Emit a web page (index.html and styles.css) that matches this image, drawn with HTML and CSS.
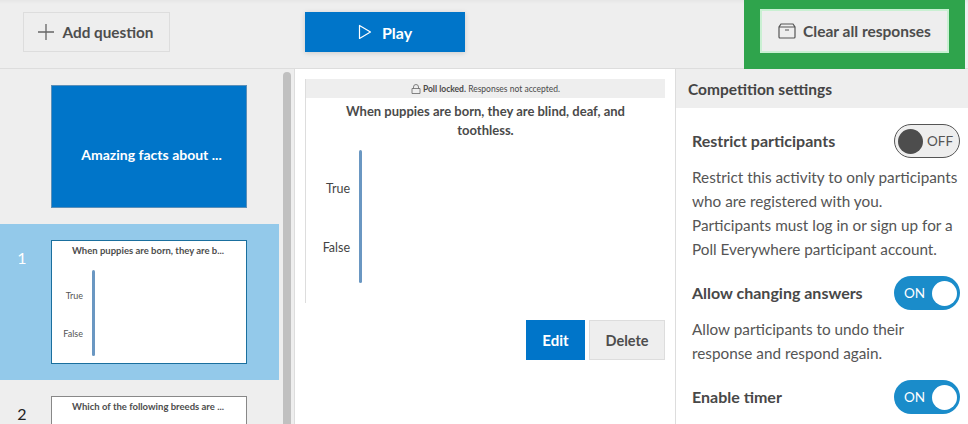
FILE: index.html
```html
<!DOCTYPE html>
<html lang="en">
<head>
<meta charset="utf-8">
<title>Competition settings</title>
<link rel="stylesheet" href="styles.css">
</head>
<body>
<header class="topbar">
  <button class="btn btn-add">
    <svg class="ico" width="18" height="18" viewBox="0 0 18 18"><path d="M9 1v16M1 9h16" fill="none" stroke="#666" stroke-width="1.300"/></svg>
    Add question
  </button>
  <button class="btn btn-play">
    <svg class="ico" width="14" height="16" viewBox="0 0 14 16"><path d="M1.500 1.500v13L12.500 8z" fill="none" stroke="#fff" stroke-width="1.200" stroke-linejoin="round"/></svg>
    Play
  </button>
  <div class="green">
    <button class="btn btn-clear">
      <svg class="ico" width="18" height="16" viewBox="0 0 18 16"><path d="M3 1h12l2 3v10a1 1 0 0 1-1 1H2a1 1 0 0 1-1-1V4zM1 4h16M7 7h4" fill="none" stroke="#555" stroke-width="1.200"/></svg>
      Clear all responses
    </button>
  </div>
</header>
<div class="body">
  <aside class="side">
    <div class="list">
      <div class="row row-first">
        <div class="num"></div>
        <div class="thumb thumb-title">Amazing facts about ...</div>
      </div>
      <div class="row row-active">
        <div class="num">1</div>
        <div class="thumb thumb-active">
          <div class="thumb-q">When puppies are born, they are b...</div>
          <div class="mini">
            <div class="mini-labels"><span>True</span><span>False</span></div>
            <div class="mini-axis"></div>
          </div>
        </div>
      </div>
      <div class="row row-next">
        <div class="num num-dark">2</div>
        <div class="thumb thumb-next">
          <div class="thumb-q">Which of the following breeds are ...</div>
        </div>
      </div>
    </div>
    <div class="track"><div class="thumbbar"></div></div>
  </aside>
  <main class="main">
    <div class="poll">
      <div class="lockbar">
        <svg width="10" height="10" viewBox="0 0 10 10"><path d="M1 4.500h8v5H1zM2.500 4.500V3a2.500 2.500 0 0 1 5 0v1.500" fill="none" stroke="#666" stroke-width=".8"/></svg>
        <span><b>Poll locked.</b> Responses not accepted.</span>
      </div>
      <h2 class="question">When puppies are born, they are blind, deaf, and toothless.</h2>
      <div class="chart">
        <div class="labels"><span>True</span><span>False</span></div>
        <div class="axis"></div>
      </div>
    </div>
    <div class="actions">
      <button class="btn btn-edit">Edit</button>
      <button class="btn btn-delete">Delete</button>
    </div>
  </main>
  <section class="settings">
    <h3 class="settings-head">Competition settings</h3>
    <div class="settings-body">
      <div class="setting">
        <strong>Restrict participants</strong>
        <span class="toggle toggle-off"><i></i>OFF</span>
      </div>
      <p>Restrict this activity to only participants who are registered with you. Participants must log in or sign up for a Poll Everywhere participant account.</p>
      <div class="setting">
        <strong>Allow changing answers</strong>
        <span class="toggle toggle-on">ON<i></i></span>
      </div>
      <p>Allow participants to undo their response and respond again.</p>
      <div class="setting">
        <strong>Enable timer</strong>
        <span class="toggle toggle-on">ON<i></i></span>
      </div>
    </div>
  </section>
</div>
</body>
</html>
```
FILE: styles.css
```css
* { box-sizing: border-box; }
html, body { margin: 0; height: 100%; overflow: hidden; }
body {
  width: 968px;
  height: 424px;
  font-family: "Lato", "Noto Sans", sans-serif;
  color: #4a4a4a;
  background: #fff;
  display: flex;
  flex-direction: column;
}
.btn {
  font: 700 15.300px "Lato", sans-serif;
  display: flex;
  align-items: center;
  justify-content: center;
  border: 1px solid #ddd;
  background: #eee;
  color: #4d4d4d;
  padding: 0;
}
.topbar {
  height: 69px;
  flex: none;
  background: linear-gradient(#e6e6e6, #eee 4px);
  border-bottom: 1px solid #ddd;
  display: flex;
  align-items: flex-start;
  padding: 12px 3px 0 23px;
}
.btn-add { width: 147px; height: 40px; gap: 7px; padding-right: 2px; }
.btn-play {
  width: 160px;
  height: 40px;
  margin-left: 135px;
  gap: 10px;
  background: #0075c9;
  border: 0;
  color: #fff;
  font-size: 16px;
  box-shadow: 0 1px 5px rgba(0,0,0,.15);
}
.green {
  width: 221px;
  height: 69px;
  margin: -12px 0 0 279px;
  background: #2fa44c;
  padding: 9px 16px 0;
}
.btn-clear {
  width: 189px;
  height: 44px;
  gap: 7px;
  border: 2px solid #c9f0d2;
  font-size: 15.500px;
  padding-bottom: 1px;
}
.body { flex: 1; display: flex; min-height: 0; }
.side {
  width: 295px;
  flex: none;
  background: #eee;
  border-right: 1px solid #ddd;
  display: flex;
  overflow: hidden;
}
.list { width: 279px; flex: none; }
.row { display: flex; padding: 16px 0; height: 156px; }
.row-first { height: 155px; }
.row-active { background: #93c9ea; }
.num {
  width: 51px;
  flex: none;
  padding: 8px 7px 0 0;
  text-align: center;
  font-size: 16px;
  color: #fff;
}
.num-dark { color: #222; }
.thumb {
  width: 196px;
  height: 124px;
  background: #fff;
  border: 1px solid #888;
  font-weight: 700;
  font-size: 9.500px;
  color: #4d4d4d;
}
.thumb-title {
  height: 123px;
  background: #0075c9;
  border-color: #5b8fb8;
  color: #fff;
  font-size: 14px;
  padding: 16px 0 0 5px;
  display: flex;
  align-items: center;
  justify-content: center;
}
.thumb-active { border-color: #1a6f9e; }
.thumb-q { text-align: center; padding: 2px 2px 0 0; line-height: 16px; }
.mini { display: flex; height: 86px; margin-top: 11px; }
.mini-labels {
  width: 31px;
  display: flex;
  flex-direction: column;
  gap: 26px;
  padding-top: 20px;
  line-height: 12px;
  text-align: right;
  font-weight: 400;
  font-size: 9px;
  color: #555;
}
.mini-axis { width: 3px; margin-left: 9px; background: #6a97c2; border-radius: 2px; }
.track { width: 15px; padding: 3px 0 0 4px; flex: none; }
.thumbbar { width: 8px; height: 100%; background: #c0c0c0; border-radius: 4px 4px 0 0; }
.main { width: 381px; flex: none; padding: 10px 10px 0; border-right: 1px solid #ddd; }
.poll { height: 224px; border-left: 1px solid #ddd; margin-bottom: 17px; }
.lockbar {
  height: 19px;
  background: #eee;
  display: flex;
  align-items: center;
  justify-content: center;
  gap: 2px;
  font-size: 8.500px;
}
.question {
  margin: 4px auto 0;
  width: 300px;
  text-align: center;
  font-size: 13px;
  line-height: 19px;
  font-weight: 700;
  color: #4a4a4a;
}
.chart { display: flex; height: 133px; margin-top: 10px; }
.labels {
  width: 44px;
  display: flex;
  flex-direction: column;
  gap: 43px;
  padding-top: 31px;
  line-height: 16px;
  text-align: right;
  font-size: 12.500px;
  color: #444;
}
.axis { width: 3px; margin-left: 9px; background: #6a97c2; border-radius: 2px; }
.actions { display: flex; justify-content: flex-end; gap: 4px; }
.btn-edit { width: 59px; height: 40px; background: #0075c9; border: 0; color: #fff; font-size: 15px; }
.btn-delete { width: 76px; height: 40px; font-size: 14.500px; }
.settings { flex: 1; }
.settings-head {
  margin: 0;
  height: 39px;
  background: #eee;
  padding-left: 12px;
  font-size: 15.500px;
  font-weight: 700;
  line-height: 41px;
  color: #444;
}
.settings-body { padding: 16px 8px 0 16px; }
.setting { display: flex; justify-content: space-between; align-items: center; height: 34px; }
.setting strong { font-size: 16px; color: #484848; padding-bottom: 2px; }
.settings-body p { margin: 7px 0 15px; font-size: 15.300px; line-height: 24px; color: #555; }
.toggle {
  width: 66px;
  height: 34px;
  border-radius: 17px;
  display: flex;
  align-items: center;
  font-size: 13.500px;
}
.toggle i { width: 25px; height: 25px; border-radius: 50%; display: block; }
.toggle-off { background: #eee; border: 1px solid #555; padding-left: 3px; gap: 4px; color: #555; }
.toggle-off i { background: #4d4d4d; }
.toggle-on { background: #1a8cca; color: #fff; padding: 0 3px 0 10px; justify-content: space-between; }
.toggle-on i { background: #fff; }
```
